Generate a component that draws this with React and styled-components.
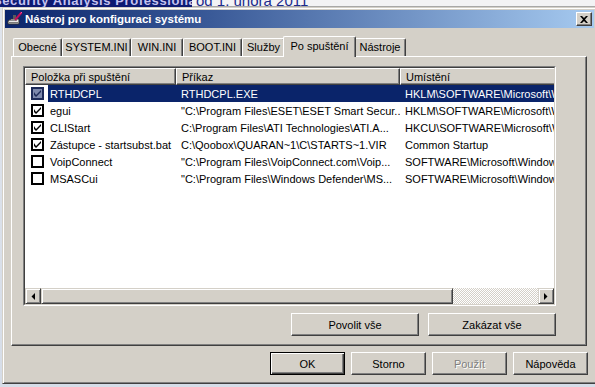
import React from "react";
import styled, { createGlobalStyle } from "styled-components";

const face = "#d4d0c8";
const shadow = "#808080";
const darkShadow = "#404040";
const highlight = "#0a246a";

const GlobalStyle = createGlobalStyle`
  html, body {
    margin: 0;
    padding: 0;
  }
  body {
    width: 595px;
    height: 387px;
    overflow: hidden;
    background: #d9e3f1;
    font-family: "Liberation Sans", Arial, sans-serif;
    font-size: 11px;
    color: #000;
  }
`;

const Page = styled.div`
  display: flex;
  flex-direction: column;
  width: 595px;
  height: 387px;
  overflow: hidden;
`;

const BackStrip = styled.div`
  display: flex;
  height: 7px;
  flex-shrink: 0;
  overflow: hidden;
`;

const BackTitle = styled.div`
  width: 192px;
  background: #0d1a72;
  overflow: hidden;
  white-space: nowrap;
  span {
    display: block;
    margin: -6px 0 0 -7px;
    font-size: 13px;
    line-height: 13px;
    font-weight: bold;
    letter-spacing: 0.6px;
    color: #c4c2f0;
  }
`;

const BackDate = styled.div`
  flex: 1;
  background: #f3f3f5;
  border-bottom: 1px solid #a8a8a8;
  overflow: hidden;
  white-space: nowrap;
  span {
    display: block;
    margin: -7px 0 0 4px;
    font-size: 15px;
    line-height: 16px;
    color: #1b2b8c;
  }
`;

const Desktop = styled.div`
  flex: 1;
  display: flex;
  padding-left: 2px;
  background: linear-gradient(180deg, #dfe4ec 0%, #d6dde8 100%);
`;

const Dialog = styled.div`
  width: 595px;
  height: 377px;
  flex-shrink: 0;
  box-sizing: border-box;
  display: flex;
  flex-direction: column;
  padding: 2px;
  background: ${face};
  border: 1px solid;
  border-color: ${face} ${darkShadow} ${darkShadow} ${face};
  box-shadow: inset 1px 1px #fff, inset -1px -1px ${shadow};
`;

const TitleBar = styled.div`
  height: 18px;
  flex-shrink: 0;
  display: flex;
  align-items: center;
  gap: 2px;
  padding: 0 2px;
  background: linear-gradient(90deg, #0a246a 0%, #3a5a98 35%, #a6caf0 100%);
`;

const TitleText = styled.span`
  color: #fff;
  font-weight: bold;
  font-size: 11.5px;
  white-space: nowrap;
`;

const CloseButton = styled.div`
  margin-left: auto;
  width: 16px;
  height: 14px;
  box-sizing: border-box;
  display: flex;
  align-items: center;
  justify-content: center;
  background: ${face};
  border: 1px solid;
  border-color: #fff ${darkShadow} ${darkShadow} #fff;
  box-shadow: inset -1px -1px ${shadow};
`;

const Body = styled.div`
  flex: 1;
  display: flex;
  flex-direction: column;
  padding: 8px 7px 6px 6px;
`;

const TabRow = styled.div`
  display: flex;
  align-items: flex-end;
  height: 20px;
  padding-left: 2px;
  position: relative;
  z-index: 1;
`;

const Tab = styled.div`
  width: ${(p) => p.$w}px;
  height: ${(p) => (p.$active ? 21 : 18)}px;
  margin: ${(p) => (p.$active ? "0 -2px -1px -2px" : "0")};
  box-sizing: border-box;
  flex-shrink: 0;
  display: flex;
  justify-content: center;
  padding-top: ${(p) => (p.$active ? 3 : 2)}px;
  background: ${face};
  border-top: 1px solid #fff;
  border-left: 1px solid #fff;
  border-right: 1px solid ${darkShadow};
  border-radius: 2px 2px 0 0;
  box-shadow: inset -1px 0 ${shadow};
  position: relative;
  z-index: ${(p) => (p.$active ? 2 : 1)};
  white-space: nowrap;
`;

const Panel = styled.div`
  height: 290px;
  box-sizing: border-box;
  display: flex;
  flex-direction: column;
  align-items: flex-start;
  padding: 9px 0 0 11px;
  border: 1px solid;
  border-color: #fff ${darkShadow} ${darkShadow} #fff;
  box-shadow: inset -1px -1px ${shadow};
`;

const ListColumn = styled.div`
  width: 533px;
  display: flex;
  flex-direction: column;
`;

const ListFrame = styled.div`
  height: 240px;
  box-sizing: border-box;
  border: 1px solid;
  border-color: ${shadow} #fff #fff ${shadow};
  display: flex;
`;

const ListInner = styled.div`
  flex: 1;
  display: flex;
  flex-direction: column;
  overflow: hidden;
  background: #fff;
  border: 1px solid;
  border-color: ${darkShadow} ${face} ${face} ${darkShadow};
`;

const HeaderRow = styled.div`
  display: flex;
  height: 17px;
  flex-shrink: 0;
`;

const HeaderCell = styled.div`
  width: ${(p) => p.$w}px;
  flex-shrink: 0;
  box-sizing: border-box;
  padding: 2px 0 0 5px;
  background: ${face};
  border: 1px solid;
  border-color: #fff ${darkShadow} ${darkShadow} #fff;
  box-shadow: inset -1px -1px ${shadow};
  white-space: nowrap;
  overflow: hidden;
`;

const Row = styled.div`
  display: flex;
  height: 17px;
  flex-shrink: 0;
  align-items: stretch;
`;

const FirstCell = styled.div`
  width: 151px;
  flex-shrink: 0;
  display: flex;
  align-items: center;
  padding-left: 6px;
  box-sizing: border-box;
`;

const Check = styled.div`
  width: 13px;
  height: 13px;
  box-sizing: border-box;
  flex-shrink: 0;
  display: flex;
  align-items: center;
  justify-content: center;
  border: 2px solid ${(p) => (p.$sel ? "#1c2a58" : "#000")};
  background: ${(p) => (p.$sel ? "#7d89ad" : "#fff")};
`;

const Label = styled.div`
  flex: 1;
  align-self: stretch;
  display: flex;
  align-items: center;
  margin-left: 4px;
  padding-left: 2px;
  background: ${(p) => (p.$sel ? highlight : "transparent")};
  color: ${(p) => (p.$sel ? "#fff" : "#000")};
  white-space: nowrap;
  overflow: hidden;
`;

const Cell = styled.div`
  width: ${(p) => (p.$w ? `${p.$w}px` : "auto")};
  flex: ${(p) => (p.$w ? "0 0 auto" : "1 0 300px")};
  display: flex;
  align-items: center;
  padding-left: 5px;
  box-sizing: border-box;
  background: ${(p) => (p.$sel ? highlight : "transparent")};
  color: ${(p) => (p.$sel ? "#fff" : "#000")};
  white-space: nowrap;
  overflow: hidden;
`;

const Filler = styled.div`
  flex: 1;
`;

const ScrollBar = styled.div`
  display: flex;
  height: 16px;
  flex-shrink: 0;
`;

const Raised = styled.div`
  box-sizing: border-box;
  background: ${face};
  border: 1px solid;
  border-color: ${face} ${darkShadow} ${darkShadow} ${face};
  box-shadow: inset 1px 1px #fff, inset -1px -1px ${shadow};
`;

const ArrowButton = styled(Raised)`
  width: 16px;
  flex-shrink: 0;
  display: flex;
  align-items: center;
  justify-content: center;
`;

const Thumb = styled(Raised)`
  width: 412px;
  flex-shrink: 0;
`;

const Track = styled.div`
  flex: 1;
  background: repeating-conic-gradient(#fff 0 25%, ${face} 0 50%) 0 0 / 2px 2px;
`;

const ActionRow = styled.div`
  display: flex;
  justify-content: flex-end;
  gap: ${(p) => p.$gap || 6}px;
  margin-top: ${(p) => p.$top || 0}px;
  margin-right: ${(p) => p.$right || 0}px;
`;

const Button = styled.div`
  width: ${(p) => p.$w || 75}px;
  height: 23px;
  box-sizing: border-box;
  display: flex;
  align-items: center;
  justify-content: center;
  font-weight: normal;
  background: ${face};
  border: 1px solid;
  border-color: ${(p) =>
    p.$default ? "#000" : `#fff ${darkShadow} ${darkShadow} #fff`};
  box-shadow: ${(p) =>
    p.$default
      ? `inset 1px 1px #fff, inset -1px -1px ${darkShadow}, inset -2px -2px ${shadow}`
      : `inset -1px -1px ${shadow}`};
  color: ${(p) => (p.$disabled ? shadow : "#000")};
  text-shadow: ${(p) => (p.$disabled ? "1px 1px #fff" : "none")};
  white-space: nowrap;
`;

const tabs = [
  { label: "Obecné", w: 49 },
  { label: "SYSTEM.INI", w: 69 },
  { label: "WIN.INI", w: 52 },
  { label: "BOOT.INI", w: 59 },
  { label: "Služby", w: 43 },
  { label: "Po spuštění", w: 73, active: true },
  { label: "Nástroje", w: 52 },
];

const rows = [
  {
    name: "RTHDCPL",
    cmd: "RTHDCPL.EXE",
    loc: "HKLM\\SOFTWARE\\Microsoft\\Windows\\CurrentVersion\\Run",
    checked: true,
    selected: true,
  },
  {
    name: "egui",
    cmd: '"C:\\Program Files\\ESET\\ESET Smart Secur...',
    loc: "HKLM\\SOFTWARE\\Microsoft\\Windows\\CurrentVersion\\Run",
    checked: true,
  },
  {
    name: "CLIStart",
    cmd: "C:\\Program Files\\ATI Technologies\\ATI.A...",
    loc: "HKCU\\SOFTWARE\\Microsoft\\Windows\\CurrentVersion\\Run",
    checked: true,
  },
  {
    name: "Zástupce - startsubst.bat",
    cmd: "C:\\Qoobox\\QUARAN~1\\C\\STARTS~1.VIR",
    loc: "Common Startup",
    checked: true,
  },
  {
    name: "VoipConnect",
    cmd: '"C:\\Program Files\\VoipConnect.com\\Voip...',
    loc: "SOFTWARE\\Microsoft\\Windows\\CurrentVersion\\Run",
    checked: false,
  },
  {
    name: "MSASCui",
    cmd: '"C:\\Program Files\\Windows Defender\\MS...',
    loc: "SOFTWARE\\Microsoft\\Windows\\CurrentVersion\\Run",
    checked: false,
  },
];

function AppIcon() {
  return (
    <svg width="16" height="16" viewBox="0 0 16 16">
      <path d="M1 10 L4 8 L12 8 L12 13 L1 13 Z" fill="#e8e8e8" stroke="#303030" strokeWidth="1" />
      <rect x="2" y="11" width="9" height="1" fill="#7a7a7a" />
      <path d="M3 9.5 L10 9.5" stroke="#909090" />
      <rect x="6" y="4" width="3" height="4" fill="#5a5a5a" />
      <path d="M8 9 L14.5 1.5" stroke="#c0105a" strokeWidth="2" />
      <path d="M13.5 2.5 L15 1" stroke="#ff4fa0" strokeWidth="1" />
    </svg>
  );
}

function CloseGlyph() {
  return (
    <svg width="8" height="7" viewBox="0 0 8 7">
      <path d="M0 0 L2 0 L4 2 L6 0 L8 0 L5 3.5 L8 7 L6 7 L4 5 L2 7 L0 7 L3 3.5 Z" fill="#000" />
    </svg>
  );
}

function CheckGlyph({ color }) {
  return (
    <svg width="7" height="7" viewBox="0 0 7 7">
      <path d="M0 2 L0 5 L2 7 L7 2 L7 0 L2 5 Z" fill={color} />
    </svg>
  );
}

function Arrow({ dir }) {
  return (
    <svg width="4" height="7" viewBox="0 0 4 7">
      {dir === "left" ? (
        <path d="M4 0 L4 7 L0.5 3.5 Z" fill="#000" />
      ) : (
        <path d="M0 0 L0 7 L3.5 3.5 Z" fill="#000" />
      )}
    </svg>
  );
}

function StartupRow({ row }) {
  const sel = !!row.selected;
  return (
    <Row>
      <FirstCell>
        <Check $sel={sel}>
          {row.checked && <CheckGlyph color={sel ? "#1c2a58" : "#000"} />}
        </Check>
        <Label $sel={sel}>{row.name}</Label>
      </FirstCell>
      <Cell $w={224} $sel={sel}>
        {row.cmd}
      </Cell>
      <Cell $sel={sel}>{row.loc}</Cell>
    </Row>
  );
}

export default function App() {
  return (
    <Page>
      <GlobalStyle />
      <BackStrip>
        <BackTitle>
          <span>Security Analysis Professionals</span>
        </BackTitle>
        <BackDate>
          <span>od 1. února 2011</span>
        </BackDate>
      </BackStrip>
      <Desktop>
        <Dialog>
          <TitleBar>
            <AppIcon />
            <TitleText>Nástroj pro konfiguraci systému</TitleText>
            <CloseButton>
              <CloseGlyph />
            </CloseButton>
          </TitleBar>
          <Body>
            <TabRow>
              {tabs.map((t) => (
                <Tab key={t.label} $w={t.w} $active={t.active}>
                  {t.label}
                </Tab>
              ))}
            </TabRow>
            <Panel>
              <ListColumn>
                <ListFrame>
                  <ListInner>
                    <HeaderRow>
                      <HeaderCell $w={151}>Položka při spuštění</HeaderCell>
                      <HeaderCell $w={224}>Příkaz</HeaderCell>
                      <HeaderCell $w={300}>Umístění</HeaderCell>
                    </HeaderRow>
                    {rows.map((r) => (
                      <StartupRow key={r.name} row={r} />
                    ))}
                    <Filler />
                    <ScrollBar>
                      <ArrowButton>
                        <Arrow dir="left" />
                      </ArrowButton>
                      <Thumb />
                      <Track />
                      <ArrowButton>
                        <Arrow dir="right" />
                      </ArrowButton>
                    </ScrollBar>
                  </ListInner>
                </ListFrame>
                <ActionRow $gap={9} $top={7}>
                  <Button $w={128}>Povolit vše</Button>
                  <Button $w={128}>Zakázat vše</Button>
                </ActionRow>
              </ListColumn>
            </Panel>
            <ActionRow $gap={6} $top={6} $right={-1}>
              <Button $default>OK</Button>
              <Button>Storno</Button>
              <Button $disabled>Použít</Button>
              <Button>Nápověda</Button>
            </ActionRow>
          </Body>
        </Dialog>
      </Desktop>
    </Page>
  );
}
